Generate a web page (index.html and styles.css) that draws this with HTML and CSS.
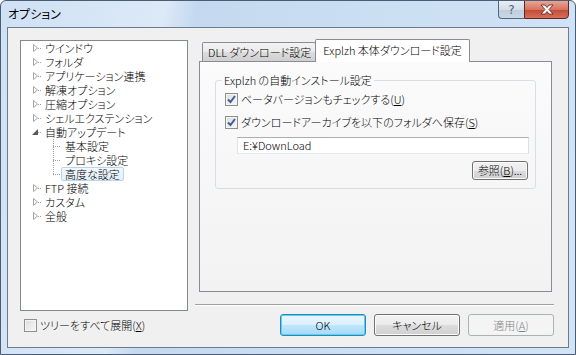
FILE: index.html
```html
<!DOCTYPE html>
<html>
<head>
  <title>オプション</title>
  <link rel="stylesheet" href="styles.css">
</head>
<body>
  <div class="window">
    <div class="titlebar">
      <span class="title">オプション</span>
      <div class="caption-buttons">
        <span class="cap-help">?</span>
        <span class="cap-close">
          <svg width="16" height="11" viewBox="0 0 16 11">
            <path d="M2 1h4l2 2.5L10 1h4l-4 4.5 4 4.5h-4l-2-2.5L6 10H2l4-4.5z" fill="#fff" stroke="#5a2218" stroke-width="0.8" stroke-linejoin="round"/>
          </svg>
        </span>
      </div>
    </div>

    <div class="client">
      <div class="left">
        <ul class="tree">
          <li class="node"><span class="exp closed"></span><span class="stub"></span><span class="label">ウインドウ</span></li>
          <li class="node"><span class="exp closed"></span><span class="stub"></span><span class="label">フォルダ</span></li>
          <li class="node"><span class="exp closed"></span><span class="stub"></span><span class="label">アプリケーション連携</span></li>
          <li class="node"><span class="exp closed"></span><span class="stub"></span><span class="label">解凍オプション</span></li>
          <li class="node"><span class="exp closed"></span><span class="stub"></span><span class="label">圧縮オプション</span></li>
          <li class="node"><span class="exp closed"></span><span class="stub"></span><span class="label">シェルエクステンション</span></li>
          <li class="node"><span class="exp open"></span><span class="stub"></span><span class="label">自動アップデート</span></li>
          <li class="node child"><span class="branch"></span><span class="label">基本設定</span></li>
          <li class="node child"><span class="branch"></span><span class="label">プロキシ設定</span></li>
          <li class="node child last"><span class="branch"></span><span class="label selected">高度な設定</span></li>
          <li class="node"><span class="exp closed"></span><span class="stub"></span><span class="label">FTP 接続</span></li>
          <li class="node"><span class="exp closed"></span><span class="stub"></span><span class="label">カスタム</span></li>
          <li class="node"><span class="exp closed"></span><span class="stub"></span><span class="label">全般</span></li>
        </ul>
        <label class="check expand-all"><span class="box"></span>ツリーをすべて展開(<u>X</u>)</label>
      </div>

      <div class="right">
        <div class="tabs">
          <span class="tab">DLL ダウンロード設定</span>
          <span class="tab active">Explzh 本体ダウンロード設定</span>
        </div>
        <div class="tab-page">
          <fieldset class="group">
            <legend>Explzh の自動インストール設定</legend>
            <label class="check"><span class="box checked"></span>ベータバージョンもチェックする(<u>U</u>)</label>
            <label class="check"><span class="box checked"></span>ダウンロードアーカイブを以下のフォルダへ保存(<u>S</u>)</label>
            <div class="textbox">E:¥DownLoad</div>
            <div class="browse-row">
              <button class="btn small">参照(<u>B</u>)...</button>
            </div>
          </fieldset>
        </div>
        <div class="separator"></div>
        <div class="buttons">
          <button class="btn default">OK</button>
          <button class="btn">キャンセル</button>
          <button class="btn" disabled>適用(<u>A</u>)</button>
        </div>
      </div>
    </div>
  </div>
</body>
</html>
```

FILE: styles.css
```css
body {
  margin: 0;
  font-family: "Noto Sans CJK JP", "Noto Sans", sans-serif;
  font-size: 11px;
  font-weight: 300;
  font-feature-settings: "palt";
  color: #000;
}

.window {
  width: 576px;
  height: 355px;
  box-sizing: border-box;
  border: 1px solid #4b5d74;
  border-radius: 6px 6px 0 0;
  background: linear-gradient(100deg, #cfe1f4 0%, #dce9f7 26%, #c4d9ef 31%, #cbdff3 60%, #d2e4f6 100%);
  display: flex;
  flex-direction: column;
  overflow: hidden;
}

/* title bar */
.titlebar {
  height: 26px;
  display: flex;
  justify-content: space-between;
  padding-left: 7px;
}

.title {
  line-height: 26px;
  font-size: 12px;
  font-weight: 400;
}

.caption-buttons {
  display: flex;
  margin-top: -1px;
  margin-right: 6px;
  height: 19px;
}

.cap-help {
  width: 25px;
  border: 1px solid #56677d;
  border-right: none;
  border-radius: 0 0 0 4px;
  background: linear-gradient(#e6eef6, #d3dee9 50%, #bfcddb 51%, #cbd8e4);
  color: #52627a;
  font-family: "DejaVu Sans", sans-serif;
  font-weight: 400;
  font-size: 12px;
  line-height: 18px;
  text-align: center;
}

.cap-close {
  width: 43px;
  border: 1px solid #5b2a22;
  border-radius: 0 0 4px 0;
  background: linear-gradient(#e7a595, #d8735f 50%, #c44a33 51%, #d4705a);
  display: flex;
  align-items: center;
  justify-content: center;
}

/* client area */
.client {
  flex: 1;
  margin: 0 6px 6px;
  border: 1px solid #6b7c8e;
  background: #f0f0f0;
  display: flex;
  padding: 12px 13px 0 12px;
  gap: 11px;
}

.left {
  width: 168px;
  display: flex;
  flex-direction: column;
}

.tree {
  list-style: none;
  margin: 0;
  height: 271px;
  box-sizing: border-box;
  padding: 0 0 0 11px;
  background: #fff;
  border: 1px solid #828790;
}

.node {
  height: 14px;
  display: flex;
  align-items: stretch;
}

.exp {
  width: 6px;
  background-repeat: no-repeat;
  background-position: center;
}

.exp.closed {
  background-image: url("data:image/svg+xml,%3Csvg xmlns='http://www.w3.org/2000/svg' width='5' height='8'%3E%3Cpath d='M0.5 0.5L4.5 4L0.5 7.5Z' fill='none' stroke='%23a6a6a6'/%3E%3C/svg%3E");
}

.exp.open {
  background-image: url("data:image/svg+xml,%3Csvg xmlns='http://www.w3.org/2000/svg' width='6' height='6'%3E%3Cpath d='M6 0L6 6L0 6Z' fill='%23595959'/%3E%3C/svg%3E");
}

.stub {
  width: 3px;
  background: repeating-linear-gradient(to right, #a0a0a0 0 1px, transparent 1px 2px) left center / 100% 1px no-repeat;
}

.child .branch {
  margin-left: 21px;
  width: 8px;
  background:
    repeating-linear-gradient(to bottom, #a0a0a0 0 1px, transparent 1px 2px) left top / 1px 100% no-repeat,
    repeating-linear-gradient(to right, #a0a0a0 0 1px, transparent 1px 2px) left center / 100% 1px no-repeat;
}

.child.last .branch {
  background-size: 1px 50%, 100% 1px;
}

.label {
  padding: 0 3px;
  border: 1px solid transparent;
  line-height: 12px;
  white-space: nowrap;
}

.label.selected {
  background: linear-gradient(#f2f8fd, #e3eff9);
  border-color: #b9d5ec;
  border-radius: 2px;
}

/* checkboxes */
.check {
  display: flex;
  align-items: center;
  height: 14px;
  line-height: 14px;
  white-space: nowrap;
}

.box {
  width: 11px;
  height: 11px;
  border: 1px solid #8e8f8f;
  background: linear-gradient(135deg, #dcdcdc, #f8f8f8);
  box-shadow: inset 0 0 0 1px #f4f4f4;
  margin-right: 3px;
  flex: none;
}

.box.checked {
  background-image: url("data:image/svg+xml,%3Csvg xmlns='http://www.w3.org/2000/svg' width='11' height='11'%3E%3Cpath d='M2 5.5L4.5 8L9 2' fill='none' stroke='%23405a99' stroke-width='2'/%3E%3C/svg%3E"), linear-gradient(135deg, #dcdcdc, #f8f8f8);
}

.expand-all {
  margin: 7px 0 0 4px;
}

/* right column */
.right {
  width: 355px;
  display: flex;
  flex-direction: column;
}

.tabs {
  height: 21px;
  display: flex;
  align-items: flex-end;
  padding-left: 3px;
}

.tab {
  height: 18px;
  line-height: 18px;
  padding: 0 4px 0 5px;
  border: 1px solid #898c95;
  border-bottom: none;
  border-radius: 2px 2px 0 0;
  background: linear-gradient(#f3f3f3, #ebebeb 50%, #dddddd 51%, #cfcfcf);
  white-space: nowrap;
}

.tab.active {
  height: 22px;
  line-height: 20px;
  margin-bottom: -1px;
  margin-left: -1px;
  padding: 0 7px 0 7px;
  background: #fff;
  position: relative;
}

.tab-page {
  height: 231px;
  box-sizing: border-box;
  border: 1px solid #898c95;
  background: linear-gradient(#fbfbfb, #f2f2f2);
  padding: 11px 0 0 15px;
  width: 353px;
}

.group {
  margin: 0;
  width: 321px;
  height: 116px;
  box-sizing: border-box;
  border: 1px solid #d5dfe5;
  border-radius: 3px;
  padding: 0 6px 0 9px;
}

.group legend {
  padding: 0 2px;
  margin-left: -3px;
  line-height: 14px;
}

.group .check {
  margin-top: 5px;
}

.group .check + .check {
  margin-top: 9px;
}

.textbox {
  margin: 8px 0 0 12px;
  height: 17px;
  box-sizing: border-box;
  border: 1px solid #abadb3;
  border-color: #abadb3 #dbdfe6 #e3e9ef #e2e3ea;
  background: #fff;
  padding-left: 5px;
  line-height: 15px;
}

.browse-row {
  display: flex;
  justify-content: flex-end;
  margin-top: 7px;
  padding-right: 1px;
}

.separator {
  margin: 12px 0 0 -4px;
  height: 1px;
  background: #a0a0a0;
  border-bottom: 1px solid #fff;
}

.buttons {
  display: flex;
  justify-content: flex-end;
  gap: 8px;
  margin-top: 8px;
}

.btn {
  font: inherit;
  font-feature-settings: "palt";
  width: 86px;
  height: 22px;
  padding: 0;
  border: 1px solid #707070;
  border-radius: 3px;
  background: linear-gradient(#f2f2f2, #ebebeb 50%, #dddddd 51%, #cfcfcf);
  box-shadow: inset 0 0 0 1px #fcfcfc;
  color: #000;
}

.btn.default {
  border-color: #3c7fb1;
  background: linear-gradient(#eaf6fd, #d9f0fc 50%, #bee6fd 51%, #a7d9f5);
  box-shadow: inset 0 0 0 1px #48d8fb;
}

.btn:disabled {
  border-color: #adb2b5;
  background: #f4f4f4;
  box-shadow: none;
  color: #838383;
}

.btn.small {
  width: 56px;
  height: 19px;
  line-height: 15px;
}
```
